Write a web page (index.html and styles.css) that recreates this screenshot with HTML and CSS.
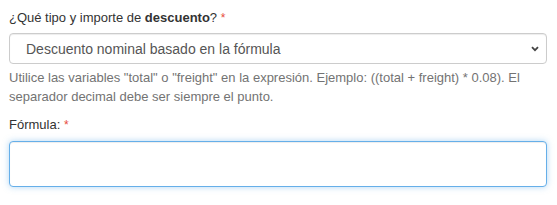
FILE: index.html
```html
<!DOCTYPE html>
<html lang="es">

<head>
    <meta charset="UTF-8">
    <title>Descuento</title>
    <link rel="stylesheet" href="styles.css">
</head>

<body>
    <form class="discount-form">
        <!-- tipo de descuento -->
        <div class="form-group">
            <label class="control-label" for="discount-type">
                ¿Qué tipo y importe de <b>descuento</b>? <span class="required">*</span>
            </label>
            <div class="select-wrap">
                <select id="discount-type" class="form-control">
                    <option>Descuento nominal basado en la fórmula</option>
                </select>
                <svg class="caret" width="8" height="6" viewBox="0 0 8 6">
                    <path d="M1 1.2 L4 4.2 L7 1.2" fill="none" stroke="#444" stroke-width="1.8"/>
                </svg>
            </div>
            <p class="help-block">
                Utilice las variables "total" o "freight" en la expresión. Ejemplo: ((total + freight) * 0.08). El
                separador decimal debe ser siempre el punto.
            </p>
        </div>

        <!-- fórmula -->
        <div class="form-group">
            <label class="control-label" for="formula">Fórmula: <span class="required">*</span></label>
            <input id="formula" type="text" class="form-control focus">
        </div>
    </form>
</body>

</html>
```

FILE: styles.css
```css
body {
    font-family: "Liberation Sans", Arial, sans-serif;
    font-size: 13px;
    color: #333;
    margin: 0;
    background: #fff;
}

.discount-form {
    padding: 8px 10px 0 9px;
}

.form-group {
    margin-bottom: 9px;
}

.control-label {
    display: block;
    line-height: 20px;
    margin-bottom: 5px;
    font-weight: normal;
}

.form-group + .form-group .control-label {
    margin-bottom: 6px;
}

.required {
    color: #e74c3c;
    font-size: 12px;
    vertical-align: top;
}

/* select con flecha propia */
.select-wrap {
    position: relative;
}

.form-control {
    display: block;
    box-sizing: border-box;
    width: 100%;
    font-family: inherit;
    background: #fff;
    border: 1px solid #ccc;
    border-radius: 4px;
    box-shadow: inset 0 1px 1px rgba(0, 0, 0, 0.075);
    margin: 0;
}

select.form-control {
    appearance: none;
    -webkit-appearance: none;
    height: 31px;
    padding: 0 30px 0 16px;
    font-size: 14px;
    color: #555;
}

.caret {
    position: absolute;
    right: 8px;
    top: 13px;
    pointer-events: none;
}

.help-block {
    margin: 5px 0 0;
    line-height: 18.5px;
    color: #737373;
}

input.form-control {
    height: 46px;
    padding: 0 12px;
    font-size: 14px;
}

.form-control.focus {
    border-color: #66afe9;
    box-shadow: inset 0 1px 1px rgba(0, 0, 0, 0.075), 0 0 6px rgba(102, 175, 233, 0.5);
}
```
